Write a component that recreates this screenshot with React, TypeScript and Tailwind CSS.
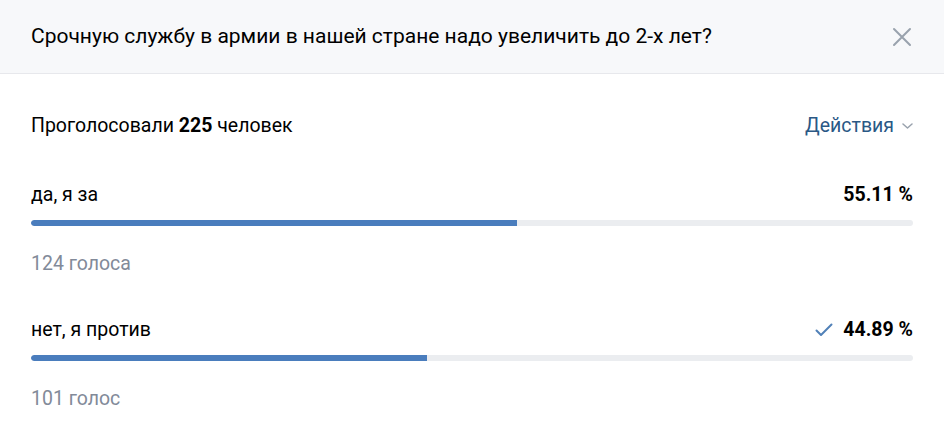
import type { FC } from "react";

interface Option {
  label: string;
  percent: number;
  votes: string;
  voted?: boolean;
}

const options: Option[] = [
  { label: "да, я за", percent: 55.11, votes: "124 голоса" },
  { label: "нет, я против", percent: 44.89, votes: "101 голос", voted: true },
];

const OptionRow: FC<{ option: Option }> = ({ option }) => (
  <div className="flex flex-col">
    <div className="flex items-center justify-between h-[26px] leading-[26px]">
      <span className="text-[19.5px] text-black">{option.label}</span>
      <span className="flex items-center gap-[10px]">
        {option.voted && (
          <svg width="18" height="14" viewBox="0 0 18 14" fill="none">
            <path d="M1.5 7.5l4.5 4.5L16.5 1.5" stroke="#5181b8" strokeWidth="2" strokeLinecap="round" strokeLinejoin="round" />
          </svg>
        )}
        <span className="text-[19.5px] font-bold text-black">{option.percent.toFixed(2)} %</span>
      </span>
    </div>
    <div className="mt-[12px] h-[6px] w-full rounded-full bg-[#ebedf0] overflow-hidden">
      <div className="h-full rounded-l-full bg-[#4a7dbd]" style={{ width: `${option.percent}%` }} />
    </div>
    <div className="mt-[25px] text-[19.5px] text-[#828a99] h-[26px] leading-[26px]">{option.votes}</div>
  </div>
);

export default function App() {
  return (
    <div className="w-[944px] h-[448px] bg-white font-['Roboto',sans-serif]">
      <div className="h-[74px] bg-[#f7f8fa] border-b border-[#e7e8ec] flex items-center justify-between pl-[31px] pr-[32px]">
        <span className="text-[21px] text-black">Срочную службу в армии в нашей стране надо увеличить до 2-х лет?</span>
        <svg width="20" height="20" viewBox="0 0 20 20" fill="none">
          <path d="M2 2l16 16M18 2L2 18" stroke="#99a2ad" strokeWidth="2" strokeLinecap="round" />
        </svg>
      </div>
      <div className="px-[31px] pt-[39px]">
        <div className="flex items-center justify-between h-[26px] leading-[26px]">
          <span className="text-[19.5px] text-black">
            Проголосовали <span className="font-bold">225</span> человек
          </span>
          <span className="flex items-center gap-[8px] text-[19.5px] text-[#2a5885]">
            Действия
            <svg width="11" height="6" viewBox="0 0 11 6" fill="none">
              <path d="M1 1l4.5 4 4.5-4" stroke="#99a2ad" strokeWidth="1.5" strokeLinecap="round" strokeLinejoin="round" />
            </svg>
          </span>
        </div>
        <div className="mt-[43px] flex flex-col gap-[40px]">
          {options.map((o) => (
            <OptionRow key={o.label} option={o} />
          ))}
        </div>
      </div>
    </div>
  );
}
